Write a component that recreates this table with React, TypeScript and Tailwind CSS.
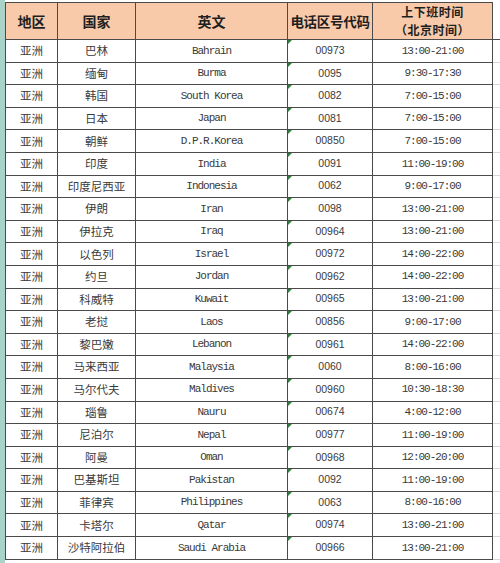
const rows: [string, string, string, string][] = [
  ['巴林', 'Bahrain', '00973', '13:00-21:00'],
  ['缅甸', 'Burma', '0095', '9:30-17:30'],
  ['韩国', 'South Korea', '0082', '7:00-15:00'],
  ['日本', 'Japan', '0081', '7:00-15:00'],
  ['朝鲜', 'D.P.R.Korea', '00850', '7:00-15:00'],
  ['印度', 'India', '0091', '11:00-19:00'],
  ['印度尼西亚', 'Indonesia', '0062', '9:00-17:00'],
  ['伊朗', 'Iran', '0098', '13:00-21:00'],
  ['伊拉克', 'Iraq', '00964', '13:00-21:00'],
  ['以色列', 'Israel', '00972', '14:00-22:00'],
  ['约旦', 'Jordan', '00962', '14:00-22:00'],
  ['科威特', 'Kuwait', '00965', '13:00-21:00'],
  ['老挝', 'Laos', '00856', '9:00-17:00'],
  ['黎巴嫩', 'Lebanon', '00961', '14:00-22:00'],
  ['马来西亚', 'Malaysia', '0060', '8:00-16:00'],
  ['马尔代夫', 'Maldives', '00960', '10:30-18:30'],
  ['瑙鲁', 'Nauru', '00674', '4:00-12:00'],
  ['尼泊尔', 'Nepal', '00977', '11:00-19:00'],
  ['阿曼', 'Oman', '00968', '12:00-20:00'],
  ['巴基斯坦', 'Pakistan', '0092', '11:00-19:00'],
  ['菲律宾', 'Philippines', '0063', '8:00-16:00'],
  ['卡塔尔', 'Qatar', '00974', '13:00-21:00'],
  ['沙特阿拉伯', 'Saudi Arabia', '00966', '13:00-21:00'],
];

const cjk = "font-['Noto_Sans_CJK_SC',sans-serif]";
const mono = "font-['Liberation_Mono',monospace]";

export default function App() {
  return (
    <div className="w-[500px] h-[563px] bg-[#e9eceb] overflow-hidden flex">
      <div className="w-[5px] shrink-0 bg-[#a9d3c9]" />
      <div className="flex-1 pt-[2px] bg-white">
        <table className="w-[495px] table-fixed border-collapse text-[#3a3a3a]">
          <colgroup>
            <col className="w-[52px]" />
            <col className="w-[78px]" />
            <col className="w-[152px]" />
            <col className="w-[85px]" />
            <col className="w-[120px]" />
            <col />
          </colgroup>
          <thead>
            <tr className={`h-[37px] bg-[#f8caa9] text-[#1f1f1f] font-bold ${cjk}`}>
              <th className="border border-[#4a4a4a] text-[14px]">地区</th>
              <th className="border border-[#4a4a4a] text-[14px]">国家</th>
              <th className="border border-[#4a4a4a] text-[14px]">英文</th>
              <th className="border border-[#4a4a4a] text-[13.5px] tracking-[-0.3px] whitespace-nowrap">电话区号代码</th>
              <th className="border border-[#4a4a4a] text-[12px] leading-[18px] tracking-[0.5px]">
                <div>上下班时间</div>
                <div>（北京时间）</div>
              </th>
              <th className="bg-white border-b border-[#4a4a4a]" />
            </tr>
          </thead>
          <tbody>
            {rows.map(([cn, en, code, time]) => (
              <tr key={en} className="h-[22.6px]">
                <td className={`border border-[#4a4a4a] text-center text-[11.5px] ${cjk}`}>亚洲</td>
                <td className={`border border-[#4a4a4a] text-center text-[11.5px] ${cjk}`}>{cn}</td>
                <td className={`border border-[#4a4a4a] text-center text-[11px] tracking-[-1px] ${mono}`}>{en}</td>
                <td className="relative border border-[#4a4a4a] text-center text-[10.5px] font-['Liberation_Sans',sans-serif]">
                  <span className="absolute left-0 top-0 w-0 h-0 border-t-[4px] border-r-[4px] border-t-[#2f7d3a] border-r-transparent" />
                  {code}
                </td>
                <td className={`border border-[#4a4a4a] text-center text-[11px] tracking-[-1px] ${mono}`}>{time}</td>
                <td className="border-b border-[#d6d6d6]" />
              </tr>
            ))}
          </tbody>
        </table>
      </div>
    </div>
  );
}
